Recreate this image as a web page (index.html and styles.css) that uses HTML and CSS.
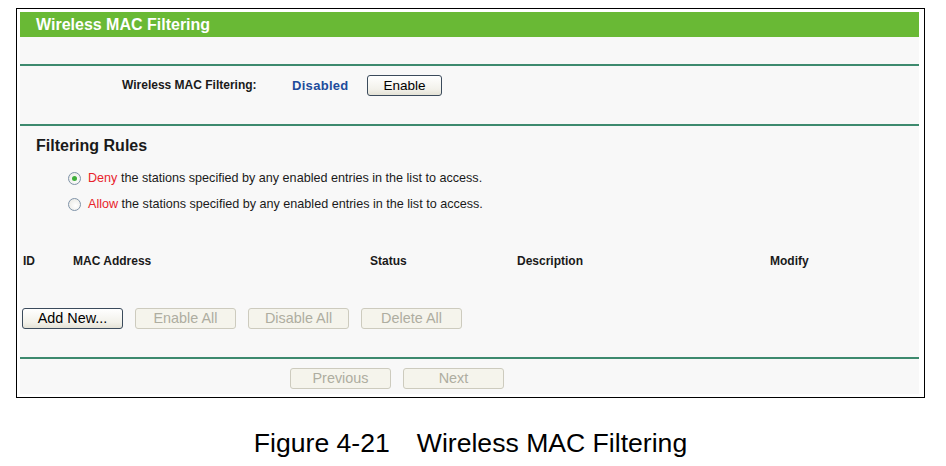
FILE: index.html
```html
<!DOCTYPE html>
<html>
<head>
<meta charset="utf-8">
<link rel="stylesheet" href="styles.css">
</head>
<body>
<div class="page">
  <div class="frame">
    <div class="panel">
      <div class="title-bar">Wireless MAC Filtering</div>
      <div class="rule rule-top"></div>
      <div class="status-row">
        <span class="status-label">Wireless MAC Filtering:</span>
        <span class="status-value">Disabled</span>
        <button class="btn btn-active btn-enable">Enable</button>
      </div>
      <div class="rule"></div>
      <div class="rules-section">
        <div class="section-title">Filtering Rules</div>
        <div class="radio-row">
          <span class="radio radio-checked"><span class="radio-dot"></span></span>
          <span class="radio-text"><span class="hl">Deny</span> the stations specified by any enabled entries in the list to access.</span>
        </div>
        <div class="radio-row">
          <span class="radio"></span>
          <span class="radio-text"><span class="hl">Allow</span> the stations specified by any enabled entries in the list to access.</span>
        </div>
      </div>
      <div class="table-head">
        <span>ID</span>
        <span>MAC Address</span>
        <span>Status</span>
        <span>Description</span>
        <span>Modify</span>
      </div>
      <div class="action-row">
        <button class="btn btn-active">Add New...</button>
        <button class="btn btn-disabled">Enable All</button>
        <button class="btn btn-disabled">Disable All</button>
        <button class="btn btn-disabled">Delete All</button>
      </div>
      <div class="rule"></div>
      <div class="pager-row">
        <button class="btn btn-disabled">Previous</button>
        <button class="btn btn-disabled">Next</button>
      </div>
    </div>
  </div>
  <div class="caption">Figure 4-21<span class="gap"></span>Wireless MAC Filtering</div>
</div>
</body>
</html>
```
FILE: styles.css
```css
html, body {
  margin: 0;
  padding: 0;
  background: #ffffff;
}
body {
  font-family: "Liberation Sans", Arial, sans-serif;
  color: #1a1a1a;
}
.page {
  padding: 8px 0 0 16px;
  width: 909px;
}
.frame {
  box-sizing: border-box;
  width: 909px;
  height: 390px;
  border: 1px solid #000;
  padding: 3px 5px 3px 3px;
  background: #ffffff;
}
.panel {
  background: #f8f8f8;
  height: 100%;
  display: flex;
  flex-direction: column;
}
.title-bar {
  height: 25px;
  line-height: 25px;
  background: #69b935;
  color: #ffffff;
  font-size: 16px;
  font-weight: bold;
  padding-left: 16px;
}
.rule {
  height: 2px;
  background: #3d8a6e;
  flex: none;
}
.rule-top {
  margin-top: 27px;
}
.status-row {
  height: 58px;
  box-sizing: border-box;
  padding: 9px 0 0 102px;
  display: flex;
  align-items: flex-start;
}
.status-label {
  font-size: 12px;
  font-weight: bold;
  line-height: 21px;
  width: 170px;
}
.status-value {
  font-size: 13px;
  font-weight: bold;
  color: #1d4c9c;
  letter-spacing: 0.3px;
  line-height: 21px;
  width: 75px;
}
.btn {
  font-family: "Liberation Sans", Arial, sans-serif;
  font-size: 14.4px;
  box-sizing: border-box;
  width: 101px;
  height: 21px;
  padding: 0;
  border-radius: 3px;
  line-height: 19px;
}
.btn-active {
  border: 1px solid #3b4b5c;
  background: linear-gradient(#ffffff, #f2f1ea 70%, #e4e2d6);
  color: #000;
}
.btn-enable {
  width: 75px;
  font-size: 13.5px;
}
.btn-disabled {
  border: 1px solid #cdcbbe;
  background: #f5f4ec;
  color: #aeada0;
}
.rules-section {
  padding: 10px 0 0 16px;
}
.section-title {
  font-size: 16px;
  font-weight: bold;
  line-height: 19px;
  margin-bottom: 10px;
}
.radio-row {
  display: flex;
  align-items: center;
  height: 26px;
  padding-left: 32px;
}
.radio {
  box-sizing: border-box;
  width: 13px;
  height: 13px;
  border-radius: 50%;
  border: 1px solid #7f93a8;
  background: radial-gradient(circle at 60% 60%, #ffffff, #e6e6e0);
  display: flex;
  align-items: center;
  justify-content: center;
  margin-right: 7px;
}
.radio-dot {
  width: 5px;
  height: 5px;
  border-radius: 50%;
  background: #3fae3a;
}
.radio-text {
  font-size: 12.6px;
  color: #1a1a1a;
}
.hl {
  color: #e8232b;
}
.table-head {
  display: grid;
  grid-template-columns: 50px 297px 147px 253px 1fr;
  padding-left: 3px;
  margin-top: 37px;
  font-size: 12px;
  font-weight: bold;
  line-height: 14px;
}
.action-row {
  display: flex;
  gap: 12px;
  padding-left: 2px;
  margin-top: 40px;
}
.action-row + .rule {
  margin-top: 28px;
}
.pager-row {
  display: flex;
  gap: 12px;
  padding-left: 270px;
  margin-top: 9px;
}
.caption {
  text-align: center;
  font-size: 26.6px;
  line-height: 30px;
  margin-top: 30px;
  color: #000;
}
.gap {
  display: inline-block;
  width: 27px;
}
```
